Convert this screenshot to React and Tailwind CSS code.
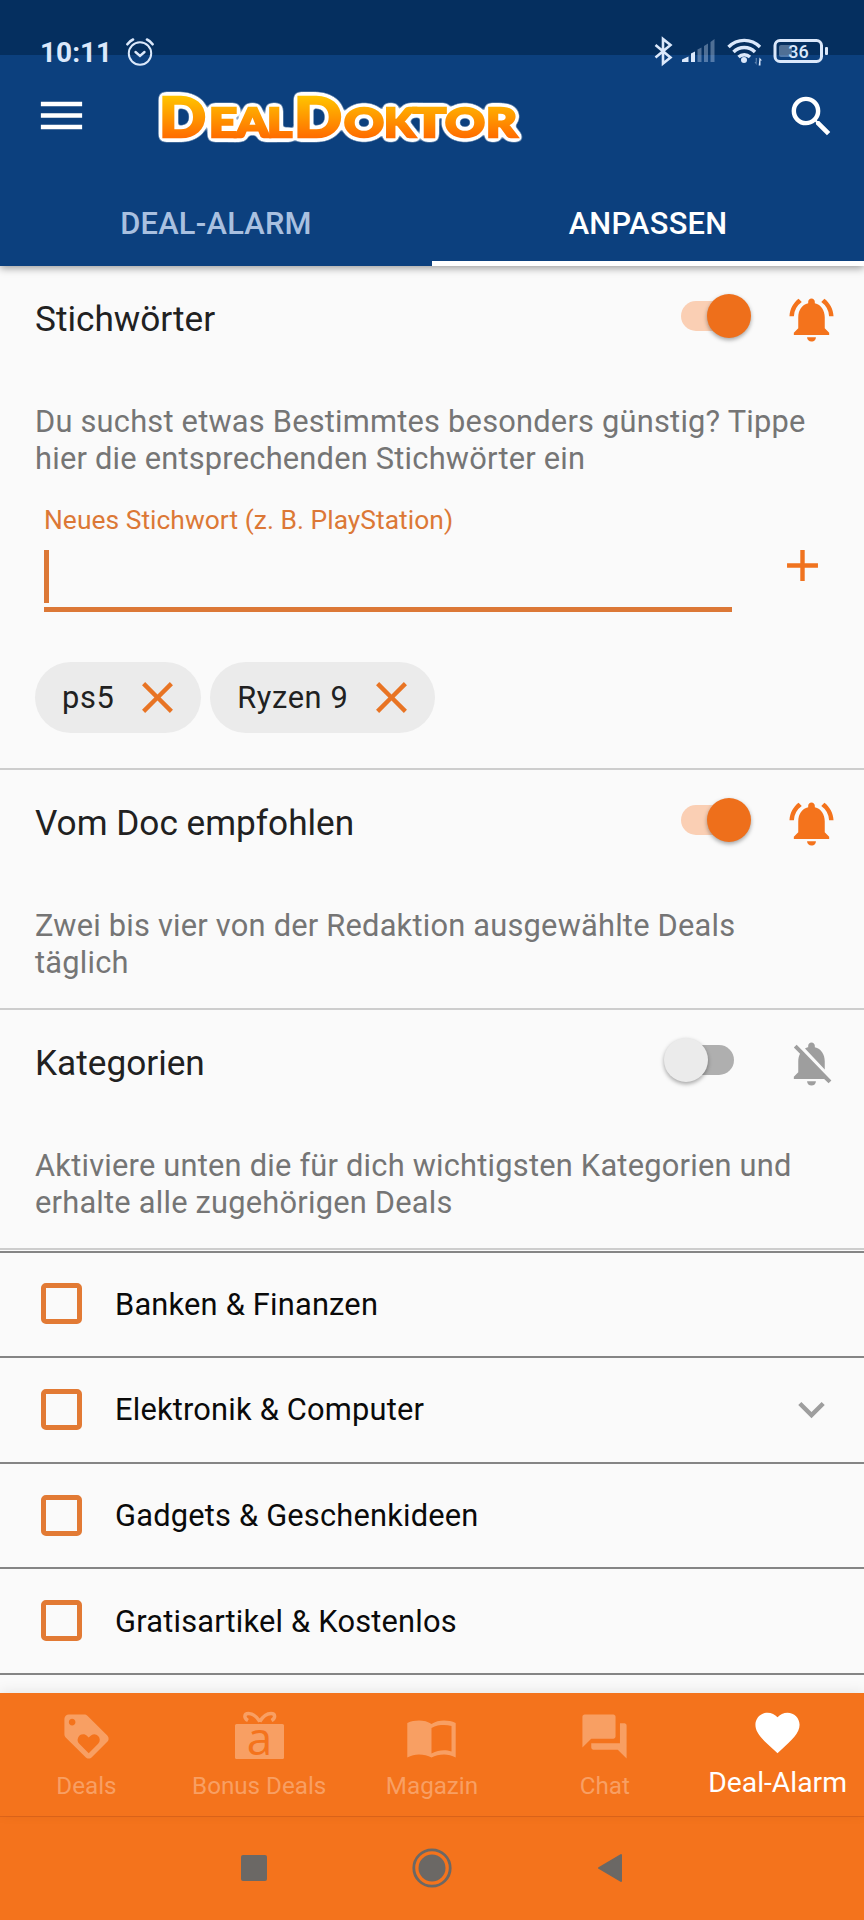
import React, { useState } from 'react'
import {
  MdAdd,
  MdClose,
  MdExpandMore,
  MdFavorite,
  MdForum,
  MdLoyalty,
  MdMenu,
  MdNotificationsActive,
  MdNotificationsOff,
  MdSearch
} from 'react-icons/md'

const CATEGORIES = [
  { name: 'Banken & Finanzen' },
  { name: 'Elektronik & Computer', expandable: true },
  { name: 'Gadgets & Geschenkideen' },
  { name: 'Gratisartikel & Kostenlos' },
  { name: '' }
]

// Each logo letter: x start, width and font size
const LOGO_LETTERS = [
  { char: 'D', x: 159, width: 47, size: 55.5 },
  { char: 'E', x: 209, width: 28, size: 39.5 },
  { char: 'A', x: 236, width: 33, size: 39.5 },
  { char: 'L', x: 267, width: 25, size: 39.5 },
  { char: 'D', x: 294, width: 48, size: 55.5 },
  { char: 'O', x: 344, width: 40, size: 39.5 },
  { char: 'K', x: 384, width: 31, size: 39.5 },
  { char: 'T', x: 413, width: 33, size: 39.5 },
  { char: 'O', x: 445, width: 40, size: 39.5 },
  { char: 'R', x: 486, width: 31, size: 39.5 }
]

const Logo = () => (
  <svg width="372" height="60" viewBox="152 86 372 60" className="overflow-visible">
    <defs>
      <linearGradient id="logoFill" gradientUnits="userSpaceOnUse" x1="0" y1="96" x2="0" y2="138">
        <stop offset="0" stopColor="#ffc400" />
        <stop offset="1" stopColor="#ff6c00" />
      </linearGradient>
      <filter id="logoOutline" filterUnits="userSpaceOnUse" x="140" y="76" width="400" height="80" colorInterpolationFilters="sRGB">
        <feGaussianBlur in="SourceAlpha" stdDeviation="2.7" />
        <feComponentTransfer result="edge">
          <feFuncA type="linear" slope="14" intercept="-0.4" />
        </feComponentTransfer>
        <feFlood floodColor="#ffffff" />
        <feComposite in2="edge" operator="in" result="outline" />
        <feMerge>
          <feMergeNode in="outline" />
          <feMergeNode in="SourceGraphic" />
        </feMerge>
      </filter>
    </defs>
    <g
      filter="url(#logoOutline)"
      fill="url(#logoFill)"
      stroke="url(#logoFill)"
      strokeWidth="2.4"
      className="font-['Lato'] font-black"
    >
      {LOGO_LETTERS.map((l, i) => (
        <text key={i} x={l.x} y="136.500" fontSize={l.size} textLength={l.width} lengthAdjust="spacingAndGlyphs">
          {l.char}
        </text>
      ))}
    </g>
  </svg>
)

const StatusBar = () => (
  <div className="flex h-[76px] shrink-0 items-start justify-between pt-[36px] pr-[34px] pl-[40px] text-[#dbe8fb]">
    <div className="flex h-[34px] items-center gap-[13px]">
      <span className="text-[28px] leading-[34px] font-bold">10:11</span>
      <svg width="30" height="30" viewBox="0 0 30 30" fill="none" stroke="currentColor" strokeWidth="2" strokeLinecap="round">
        <circle cx="15" cy="15.500" r="11.2" />
        <path d="M10.5 14l4.5 4 4.5-4" strokeWidth="2.4" />
        <path d="M2.4 6.300C4 4.100 5.600 2.500 8 1.500M27.600 6.300C26 4.100 24.400 2.500 22 1.500" strokeWidth="2.6" />
      </svg>
    </div>
    <svg width="176" height="30" viewBox="654 36 176 30" fill="none" stroke="currentColor" className="overflow-visible">
      <path d="M655.500 45l15 12.500-7.500 6V39l7.500 6-15 12.500" strokeWidth="2.600" />
      <g fill="currentColor" stroke="none">
        <path d="M682 62v-2.500l6.500-3V62z" />
        <path d="M691 62v-8.500l4-2V62z" />
        <path d="M697.500 62V49.500l4-2V62zM704 62V46l4-2.500V62zM710.500 62V42l4-3v23z" opacity="0.35" />
        <circle cx="744" cy="60" r="3" />
        <path d="M759.500 57.500l2.500 3h-1.500v5h-1.800z" />
        <path d="M756.500 65l-2-3h1.200v-4h1.300z" opacity="0.4" />
        <rect x="779" y="45" width="13" height="12" rx="2" opacity="0.35" />
        <rect x="825" y="47" width="3" height="8" rx="1" />
      </g>
      <g strokeWidth="3.400">
        <path d="M728.500 47a22 22 0 0 1 31.500 0" />
        <path d="M733.500 52a15 15 0 0 1 21.500 0" />
        <path d="M738.500 57a8.500 8.500 0 0 1 11.500 0" />
      </g>
      <rect x="775" y="40.500" width="46.500" height="21" rx="5" strokeWidth="3" />
      <text x="798.500" y="58.300" textAnchor="middle" fontSize="18" stroke="none" fill="currentColor" className="font-medium">
        36
      </text>
    </svg>
  </div>
)

const Switch = ({ on, onClick }) => (
  <button
    onClick={onClick}
    className={`relative -mt-1 flex h-[44px] w-[70px] items-center ${on ? 'mr-[34px] justify-start' : 'mr-[51px] justify-end'}`}
  >
    <span className={`h-[30px] w-[60px] rounded-full ${on ? 'bg-[#facfb4]' : 'bg-[#afafaf]'}`} />
    <span
      className={`absolute top-0 size-[44px] rounded-full shadow-[0_2px_4px_rgba(0,0,0,0.35)] ${
        on ? 'right-0 bg-[#ee6f1b]' : 'left-0 bg-[#ebebeb]'
      }`}
    />
  </button>
)

const Section = ({ title, text, on, onToggle, children }) => (
  <section className="border-b-2 border-[#cdcdcd]">
    <div className="flex h-[104px] items-center pr-[26px] pl-[35px]">
      <h2 className="flex-1 pt-px text-[35.2px] leading-[42px] text-[#212121]">{title}</h2>
      <Switch on={on} onClick={onToggle} />
      {on ? (
        <MdNotificationsActive className="mt-[2px] size-[53px] text-[#f4731c]" />
      ) : (
        <MdNotificationsOff className="mt-[2px] size-[53px] text-[#9e9e9e]" />
      )}
    </div>
    <p className="mt-[33px] pr-[40px] pl-[35px] text-[30.8px] leading-[37px] tracking-[0.22px] text-[#757575]">{text}</p>
    {children}
  </section>
)

const Chip = ({ label, onRemove }) => (
  <span className="flex h-[71px] items-center rounded-full bg-[#ebebeb] pr-[17px] pl-[27px] text-[30.8px] tracking-[0.6px] text-[#212121]">
    <span className="pt-px">{label}</span>
    <button onClick={onRemove} className="ml-[17px]">
      <MdClose className="size-[53px] text-[#e87424]" />
    </button>
  </span>
)

const GiftIcon = () => (
  <svg width="53" height="53" viewBox="0 0 53 53" fill="currentColor" className="overflow-visible">
    <path
      d="M26.800 11.500C24 7 19.500 3.500 15.500 3.500C11 3.500 10.500 8 15 10.500M26.800 11.500C29.600 7 34 3.500 38 3.500C42.500 3.500 43 8 38.500 10.500"
      fill="none"
      stroke="currentColor"
      strokeWidth="3.400"
    />
    <rect x="2" y="14" width="49" height="35" rx="1.500" />
    <text x="26.500" y="44.500" textAnchor="middle" fontSize="46" fill="#f4731c" className="font-['Open_Sans']">
      a
    </text>
  </svg>
)

const BookIcon = () => (
  <svg width="53" height="53" viewBox="0 0 53 53" fill="currentColor">
    <path d="M2.300 13C6 11.200 10 10.500 14 10.500C18.500 10.500 23 11.500 26.500 14C30 11.500 34.500 10.500 39 10.500C43 10.500 47 11.200 50.700 13V47.500C47 45.500 43 44.500 39 44.500C34.500 44.500 30 45.500 26.500 47.500C23 45.500 18.500 44.500 14 44.500C10 44.500 6 45.500 2.300 47.500Z" />
    <path
      fill="#f4731c"
      d="M26.500 18C30.500 15.500 35 15 39 15C41.500 15 44 15.300 46.500 16V41.500C44 40.500 41.500 40.200 39 40.200C35 40.200 31 41 26.500 43.500Z"
    />
  </svg>
)

const NAV_ITEMS = [
  { label: 'Deals', icon: <MdLoyalty className="size-[53px]" /> },
  { label: 'Bonus Deals', icon: <GiftIcon /> },
  { label: 'Magazin', icon: <BookIcon /> },
  { label: 'Chat', icon: <MdForum className="size-[53px]" /> },
  { label: 'Deal-Alarm', icon: <MdFavorite className="size-[53px]" />, active: true }
]

const BottomNav = () => (
  <nav className="relative flex h-[123px] shrink-0 bg-[#f4731c] shadow-[0_-2px_12px_rgba(0,0,0,0.08)]">
    {NAV_ITEMS.map((item) => (
      <button
        key={item.label}
        className={`flex flex-1 basis-0 flex-col items-center whitespace-nowrap ${
          item.active ? 'pt-[13px] text-white' : 'pt-[17px] text-[#f89f63]'
        }`}
      >
        {item.icon}
        <span className={item.active ? 'mt-[7px] text-[28.3px] leading-[34px]' : 'mt-[8px] text-[24.2px] leading-[30px]'}>
          {item.label}
        </span>
      </button>
    ))}
  </nav>
)

const SystemNav = () => (
  <div className="flex h-[104px] shrink-0 items-center justify-center gap-[145px] border-t border-[#e0651a] bg-[#f4731c] pr-px pb-[2px] text-[#6b6865]">
    <span className="size-[26px] rounded-[2px] bg-current" />
    <svg width="40" height="40" viewBox="0 0 40 40">
      <circle cx="20" cy="20" r="18.200" fill="none" stroke="currentColor" strokeWidth="2.800" />
      <circle cx="20" cy="20" r="13.500" fill="currentColor" />
    </svg>
    <svg width="26" height="30" viewBox="0 0 26 30">
      <path d="M2 15L24 2v26z" fill="currentColor" stroke="currentColor" strokeWidth="2" strokeLinejoin="round" />
    </svg>
  </div>
)

const App = () => {
  const [keywords, setKeywords] = useState(['ps5', 'Ryzen 9'])
  const [alarms, setAlarms] = useState({ keywords: true, doc: true, categories: false })
  const [checked, setChecked] = useState({})

  const toggleAlarm = (key) => setAlarms(prev => ({ ...prev, [key]: !prev[key] }))

  return (
    <div className="flex h-[1920px] w-[864px] flex-col overflow-hidden bg-[#fafafa] font-['Roboto',sans-serif]">
      <header className="relative flex h-[266px] shrink-0 flex-col bg-[linear-gradient(#052f5f_55px,#0c407e_55px)] shadow-[0_2px_8px_rgba(0,0,0,0.4)]">
        <StatusBar />
        <div className="flex h-[78px] shrink-0 items-center pr-[26px] pl-[34px]">
          <button>
            <MdMenu className="size-[55px] text-white" />
          </button>
          <div className="ml-[63px] flex-1 pt-[2px]">
            <Logo />
          </div>
          <button className="pt-[2px]">
            <MdSearch className="size-[53px] text-white" />
          </button>
        </div>
        <div className="flex flex-1 text-[30.8px] font-medium tracking-[0.25px]">
          <button className="flex-1 pt-[29px] text-[#a9c0e0]">DEAL-ALARM</button>
          <button className="flex-1 border-b-[5px] border-white pt-[34px] text-white">ANPASSEN</button>
        </div>
      </header>

      <main className="min-h-0 flex-1 overflow-hidden">
        <Section
          title="Stichwörter"
          text="Du suchst etwas Bestimmtes besonders günstig? Tippe hier die entsprechenden Stichwörter ein"
          on={alarms.keywords}
          onToggle={() => toggleAlarm('keywords')}
        >
          <div className="mt-[28px] flex items-start pl-[44px]">
            <div className="w-[688px] border-b-[5px] border-[#dc7836] pb-[4px] text-[#dc7836]">
              <label className="block text-[26.4px] leading-[31px] tracking-[0.03px]">Neues Stichwort (z. B. PlayStation)</label>
              <div className="mt-[14px] h-[53px] w-[5px] bg-[#dc7836]" />
            </div>
            <button className="mt-[34px] ml-[44px]">
              <MdAdd className="size-[53px] text-[#f0731f]" />
            </button>
          </div>
          <div className="mt-[50px] mb-[35px] flex gap-[9px] pl-[35px]">
            {keywords.map((word) => (
              <Chip key={word} label={word} onRemove={() => setKeywords(prev => prev.filter(w => w !== word))} />
            ))}
          </div>
        </Section>

        <Section
          title="Vom Doc empfohlen"
          text="Zwei bis vier von der Redaktion ausgewählte Deals täglich"
          on={alarms.doc}
          onToggle={() => toggleAlarm('doc')}
        >
          <div className="h-[27px]" />
        </Section>

        <Section
          title="Kategorien"
          text="Aktiviere unten die für dich wichtigsten Kategorien und erhalte alle zugehörigen Deals"
          on={alarms.categories}
          onToggle={() => toggleAlarm('categories')}
        >
          <div className="h-[27px]" />
        </Section>

        <ul className="pt-[0.6px]">
          {CATEGORIES.map((cat) => (
            <li key={cat.name} className="flex h-[105.6px] items-center border-t-2 border-[#858585] pr-[26px] pl-[41px]">
              {cat.name && (
                <button
                  onClick={() => setChecked(prev => ({ ...prev, [cat.name]: !prev[cat.name] }))}
                  className={`-mt-px size-[41px] rounded-[5px] border-5 border-[#e27a34] ${checked[cat.name] ? 'bg-[#e27a34]' : ''}`}
                />
              )}
              <span className="ml-[33px] flex-1 pt-px text-[30.8px] tracking-[0.2px] text-[#0a0a0a]">{cat.name}</span>
              {cat.expandable && <MdExpandMore className="-mt-px size-[53px] text-[#9e9e9e]" />}
            </li>
          ))}
        </ul>
      </main>

      <BottomNav />
      <SystemNav />
    </div>
  )
}

export default App
